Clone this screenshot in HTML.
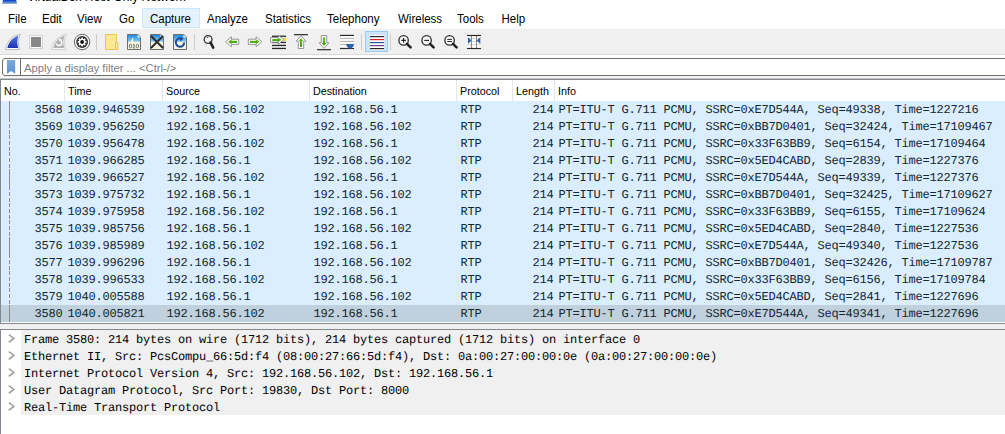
<!DOCTYPE html>
<html><head><meta charset="utf-8">
<style>
*{box-sizing:border-box;margin:0;padding:0}
html,body{width:1005px;height:434px;overflow:hidden;background:#fff;position:relative}
body{font-family:"Liberation Sans",sans-serif;color:#000}
.abs{position:absolute}
#title{position:absolute;left:27px;top:-9px;font-size:12px;line-height:12px;white-space:nowrap;color:#000}
#menu{position:absolute;left:0;top:8px;height:20px;width:1005px}
#menu span{position:absolute;top:0;height:20px;line-height:20px;font-size:11.5px;white-space:nowrap;transform:scaleY(1.12);transform-origin:50% 5.7px}
#menu .hot{background:#e5f3ff;border:1px solid #cce8ff}
#tb{position:absolute;left:0;top:28px;width:1005px;height:27px;background:#f0f0f0;border-top:1px solid #fafafa;border-bottom:1px solid #d8d8d8}
.sep{position:absolute;top:34px;width:1px;height:16px;background:#c8c8c8}
#filt{position:absolute;left:2px;top:58px;width:1010px;height:18px;border:1px solid #6e6e6e;border-radius:3px;background:#fff}
#plist{position:absolute;left:0;top:79px;width:1005px;height:245px;border:1px solid #828790;border-right:none;background:#fff;overflow:hidden}
.hdr{position:absolute;top:1px;height:21px;line-height:21px;font-size:10.75px;color:#000;white-space:nowrap}
.csep{position:absolute;top:0;width:1px;height:21px;background:#e5e5e5}
.row{position:absolute;left:0;width:1005px;height:17px;background:#daeeff;font-family:"Liberation Mono",monospace;font-size:12px;letter-spacing:-0.2px;line-height:18px;text-rendering:geometricPrecision;color:#12272e;white-space:nowrap}
.row.sel{background:#c0d0dc}
.tl{position:absolute;left:8px;width:1px;background:#8c8c8c}
.row span{position:absolute;top:0}
.no{left:0;width:61.5px;text-align:right}
.ln{left:511px;width:41.5px;text-align:right}
#dlist{position:absolute;left:0;top:329px;width:1005px;height:110px;border:1px solid #828790;border-right:none;background:#fff;overflow:hidden}
.drow{position:absolute;left:20px;width:990px;height:17px;background:#f0f0f0;font-family:"Liberation Mono",monospace;font-size:12px;letter-spacing:-0.2px;line-height:18px;text-rendering:geometricPrecision;color:#000;white-space:nowrap}
.drow span{position:absolute;left:3px;top:1px}
</style></head><body>
<svg width="20" height="5" style="position:absolute;left:0;top:0"><defs><linearGradient id="gti" x1="0" y1="0" x2="0" y2="1"><stop offset="0" stop-color="#0a3cc0"/><stop offset="0.55" stop-color="#3f78e0"/><stop offset="1" stop-color="#7f9fd8"/></linearGradient></defs><path d="M3,0 H16.2 L17,3.6 H2.2 Z" fill="url(#gti)"/><rect x="2.2" y="3.2" width="14.8" height="0.8" fill="#9aa4b4"/></svg>
<div id="title">VirtualBox Host-Only Network</div>
<div id="menu">
<span style="left:8px">File</span>
<span style="left:42px">Edit</span>
<span style="left:77px">View</span>
<span style="left:119px">Go</span>
<div class="hot" style="position:absolute;left:142px;top:0;width:58px;height:20px"></div><span style="left:150px">Capture</span>
<span style="left:207px">Analyze</span>
<span style="left:265px">Statistics</span>
<span style="left:327px">Telephony</span>
<span style="left:398px">Wireless</span>
<span style="left:457px">Tools</span>
<span style="left:501.5px">Help</span>
</div>
<svg id="tbsvg" width="1005" height="27" viewBox="0 28 1005 27" style="position:absolute;left:0;top:28px">
<defs>
<linearGradient id="gfin" x1="0" y1="0" x2="0" y2="1"><stop offset="0" stop-color="#5574dc"/><stop offset="1" stop-color="#1c32b4"/></linearGradient>
<linearGradient id="gsky" x1="0" y1="0" x2="0" y2="1"><stop offset="0" stop-color="#1b8de0"/><stop offset="1" stop-color="#8fcaf2"/></linearGradient>
<linearGradient id="ggrn" x1="0" y1="0" x2="0" y2="1"><stop offset="0" stop-color="#6cc420"/><stop offset="1" stop-color="#3a9a08"/></linearGradient>
</defs>
<rect x="0" y="28" width="1005" height="27" fill="#f0f0f0"/>
<rect x="0" y="28" width="1005" height="1" fill="#fbfbfb"/>
<rect x="0" y="54" width="1005" height="1" fill="#dadada"/>
<!-- separators -->
<rect x="96" y="34" width="1" height="16" fill="#cdcdcd"/>
<rect x="194" y="34" width="1" height="16" fill="#cdcdcd"/>
<rect x="361" y="34" width="1" height="16" fill="#cdcdcd"/>
<rect x="390" y="34" width="1" height="16" fill="#cdcdcd"/>
<!-- 1 shark fin -->
<path d="M5.6,49.6 C6.4,42.5 11.5,35.6 20.6,34.4 L19.4,36 C18.2,40.5 18.2,45 19.6,49.6 Z" fill="#fff" stroke="#bcbcbc" stroke-width="1"/>
<path d="M7.4,48 C8.4,42.6 12.2,37.6 18.4,35.8 C17,40.2 17,44.2 18.2,48 Z" fill="url(#gfin)"/>
<!-- 2 stop -->
<rect x="29.5" y="35.5" width="13" height="13" fill="#fff" stroke="#d2d2d2"/>
<rect x="31" y="37" width="10" height="10" fill="#888"/>
<!-- 3 restart fin (disabled) -->
<path d="M51.6,49.6 C52.4,42.5 57.5,35.6 66.6,34.4 L65.4,36 C64.2,40.5 64.2,45 65.6,49.6 Z" fill="#f8f8f8" stroke="#cfcfcf" stroke-width="1"/>
<path d="M53.4,48 C54.4,42.6 58.2,37.6 64.4,35.8 C63,40.2 63,44.2 64.2,48 Z" fill="#b2b2b2"/>
<path d="M60.6,40.2 A2.9,2.9 0 1 1 56.2,43.4" fill="none" stroke="#fff" stroke-width="1.5"/><path d="M58.8,38.6 L61.8,39.6 L59.8,42 Z" fill="#fff"/>
<!-- 4 gear -->
<circle cx="82.1" cy="42" r="7.7" fill="#fff" stroke="#555" stroke-width="0.9"/>
<circle cx="82.1" cy="42" r="5.9" fill="#303030"/>
<g fill="#fff" transform="translate(82.1,42)">
<circle r="3.3"/>
<rect x="-0.85" y="-4.4" width="1.7" height="8.8"/>
<rect x="-4.4" y="-0.85" width="8.8" height="1.7"/>
<rect x="-0.85" y="-4.4" width="1.7" height="8.8" transform="rotate(45)"/>
<rect x="-0.85" y="-4.4" width="1.7" height="8.8" transform="rotate(-45)"/>
</g>
<circle cx="82.1" cy="42" r="1.9" fill="#111"/>
<!-- 5 open folder/doc -->
<rect x="105.5" y="34.5" width="11" height="15" fill="#fde89a" stroke="#e9c45a"/>
<rect x="115.5" y="42.5" width="2.4" height="7" fill="#fde89a" stroke="#e9c45a"/>
<!-- 6 file 010 -->
<path d="M127.5,34.5 H137.8 L140.5,37.2 V49.5 H127.5 Z" fill="#f7f5df" stroke="#6e6e6e"/>
<path d="M128,35 H137.5 L140,37.5 V41.8 H128 Z" fill="url(#gsky)"/>
<path d="M137.5,35 L140,37.5 H137.5 Z" fill="#fff"/>
<path d="M130.8,41.8 C131.5,39.5 132.5,38 133.4,37.6 C133,39.5 133,40.5 133.6,41.8 Z" fill="#fff"/>
<g fill="none" stroke="#666" stroke-width="0.9"><ellipse cx="130.6" cy="46.1" rx="1.25" ry="1.85"/><path d="M133.2,44.6 L134.1,44.1 V48 M133.1,48 H135"/><ellipse cx="137.4" cy="46.1" rx="1.25" ry="1.85"/></g>
<!-- 7 close file -->
<path d="M150.5,34.5 H160.8 L163.5,37.2 V49.5 H150.5 Z" fill="#f7f5df" stroke="#6e6e6e"/>
<path d="M151,35 H160.5 L163,37.5 V41.8 H151 Z" fill="url(#gsky)"/>
<path d="M160.5,35 L163,37.5 H160.5 Z" fill="#fff"/>
<path d="M151.5,36.5 L162.5,47.5 M162.5,36.5 L151.5,47.5" stroke="#2e2e2e" stroke-width="2.1" stroke-linecap="round"/>
<!-- 8 reload -->
<path d="M173.5,34.5 H183.8 L186.5,37.2 V49.5 H173.5 Z" fill="#f7f5df" stroke="#6e6e6e"/>
<path d="M174,35 H183.5 L186,37.5 V41.8 H174 Z" fill="url(#gsky)"/>
<path d="M183.5,35 L186,37.5 H183.5 Z" fill="#fff"/>
<path d="M184.2,42.5 A4.2,4.2 0 1 1 181.5,38.6" fill="none" stroke="#1a4aa0" stroke-width="2"/>
<path d="M179.8,36.4 L183.6,38.6 L180.2,41.4 Z" fill="#1a4aa0"/>
<!-- 9 find -->
<circle cx="208.1" cy="39.5" r="3.9" fill="#f3f3f3" stroke="#333" stroke-width="1.3"/>
<path d="M206.5,38.2 A2,2 0 0 1 208.4,37.2" fill="none" stroke="#444" stroke-width="0.9"/>
<path d="M210.6,42.6 L213.2,47.6" stroke="#222" stroke-width="2.6" stroke-linecap="round"/>
<!-- 10 back -->
<path d="M225.6,41.8 L231.4,36.8 V39.2 H238.7 V44.4 H231.4 V46.8 Z" fill="#fff" stroke="#8a8a8a" stroke-width="0.9" stroke-linejoin="round"/>
<path d="M228,41.8 L231.6,39.3 V40.8 H237 V42.9 H231.6 V44.3 Z" fill="url(#ggrn)"/>
<!-- 11 forward -->
<path d="M261.9,41.8 L256.1,36.8 V39.2 H248.3 V44.4 H256.1 V46.8 Z" fill="#fff" stroke="#8a8a8a" stroke-width="0.9" stroke-linejoin="round"/>
<path d="M259.5,41.8 L255.9,39.3 V40.8 H250 V42.9 H255.9 V44.3 Z" fill="url(#ggrn)"/>
<!-- 12 goto packet -->
<rect x="272" y="35.6" width="14" height="1.3" fill="#2a2a2a"/>
<rect x="272" y="41.8" width="14" height="1.3" fill="#2a2a2a"/>
<rect x="272" y="44.8" width="14" height="1.3" fill="#2a2a2a"/>
<rect x="272" y="47.8" width="14" height="1.3" fill="#2a2a2a"/>
<rect x="283" y="37.8" width="3" height="3" fill="#f6d83a"/>
<path d="M283.6,39.7 L278.4,35.2 V37.5 H270.6 V42.2 H278.4 V44.4 Z" fill="#fff" stroke="#8a8a8a" stroke-width="0.9" stroke-linejoin="round"/>
<path d="M281.4,39.8 L277.8,37.6 V38.9 H272.2 V40.9 H277.8 V42.2 Z" fill="url(#ggrn)"/>
<!-- 13 first packet -->
<rect x="294" y="34" width="14" height="1.3" fill="#3a3a3a"/>
<path d="M301,35.6 L305.9,41.2 H303.7 V48.5 H298.3 V41.2 H296.1 Z" fill="#fff" stroke="#8a8a8a" stroke-width="0.9" stroke-linejoin="round"/>
<path d="M301,38 L303.4,41 H302.1 V46.8 H299.9 V41 H298.6 Z" fill="url(#ggrn)"/>
<!-- 14 last packet -->
<rect x="317" y="49" width="14" height="1.3" fill="#3a3a3a"/>
<path d="M324,48.4 L328.9,42.8 H326.7 V35.5 H321.3 V42.8 H319.1 Z" fill="#fff" stroke="#8a8a8a" stroke-width="0.9" stroke-linejoin="round"/>
<path d="M324,46 L326.4,43 H325.1 V37.2 H322.9 V43 H321.6 Z" fill="url(#ggrn)"/>
<!-- 15 auto scroll -->
<rect x="340" y="34.5" width="14" height="15" fill="#fff" opacity="0.6"/>
<rect x="340" y="34.8" width="14" height="1.2" fill="#2a2a2a"/>
<rect x="340" y="37.9" width="14" height="1.1" fill="#b9bcb2"/>
<rect x="340" y="40.9" width="14" height="1.1" fill="#b9bcb2"/>
<rect x="340" y="43.9" width="14" height="1.1" fill="#b9bcb2"/>
<rect x="340" y="47.9" width="14" height="1.2" fill="#2a2a2a"/>
<path d="M346.2,44 H354 C354,46.5 351.5,48.5 350.1,48.8 C348.7,48.5 346.2,46.5 346.2,44 Z" fill="#2d60aa"/>
<!-- 16 colorize (pressed) -->
<rect x="365.5" y="31.5" width="22" height="20" fill="#cce4f7" stroke="#99ccf5"/>
<rect x="370" y="35" width="14" height="15" fill="#fff"/>
<rect x="370" y="36" width="14" height="1.2" fill="#2a2a2a"/>
<rect x="370" y="39" width="14" height="1.2" fill="#e02222"/>
<rect x="370" y="42" width="14" height="1.2" fill="#2454a4"/>
<rect x="370" y="45" width="14" height="1.2" fill="#6a4486"/>
<rect x="370" y="48" width="14" height="1.2" fill="#2a2a2a"/>
<!-- 17 zoom in -->
<circle cx="403.6" cy="40.4" r="4.7" fill="#f6f6f6" stroke="#2e2e2e" stroke-width="1.3"/>
<path d="M401.3,40.4 H405.9 M403.6,38.1 V42.7" stroke="#222" stroke-width="1.1"/>
<path d="M407,43.8 L410.6,47.4" stroke="#222" stroke-width="2.6" stroke-linecap="round"/>
<!-- 18 zoom out -->
<circle cx="426.6" cy="40.4" r="4.7" fill="#f6f6f6" stroke="#2e2e2e" stroke-width="1.3"/>
<path d="M424.2,40.4 H429" stroke="#222" stroke-width="1.1"/>
<path d="M430,43.8 L433.6,47.4" stroke="#222" stroke-width="2.6" stroke-linecap="round"/>
<!-- 19 zoom normal -->
<circle cx="449.6" cy="40.4" r="4.7" fill="#f6f6f6" stroke="#2e2e2e" stroke-width="1.3"/>
<path d="M447.3,39.4 H451.9 M447.3,41.5 H451.9" stroke="#222" stroke-width="1"/>
<path d="M453,43.8 L456.6,47.4" stroke="#222" stroke-width="2.6" stroke-linecap="round"/>
<!-- 20 resize columns -->
<rect x="467" y="35" width="14" height="14" fill="#fff"/>
<rect x="467" y="38.3" width="14" height="0.8" fill="#c4c8bc"/>
<rect x="467" y="41.3" width="14" height="0.8" fill="#c4c8bc"/>
<rect x="467" y="44.3" width="14" height="0.8" fill="#c4c8bc"/>
<rect x="471" y="35" width="1" height="14" fill="#8a8a8a"/>
<rect x="476" y="35" width="1" height="14" fill="#8a8a8a"/>
<rect x="467" y="34.9" width="14" height="1.2" fill="#2a2a2a"/>
<rect x="467" y="47.9" width="14" height="1.2" fill="#2a2a2a"/>
<path d="M468,37.2 L471.4,40.6 L468,44 Z" fill="#2e62b0"/>
<path d="M480.3,37.2 L476.7,40.6 L480.3,44 Z" fill="#2e62b0"/>
</svg>

<div id="filt"><svg width="20" height="17" style="position:absolute;left:0;top:0"><defs><linearGradient id="gbm" x1="0" y1="0" x2="0" y2="1"><stop offset="0" stop-color="#7eaadc"/><stop offset="1" stop-color="#5b90d2"/></linearGradient></defs><path d="M4,1.1 H12.2 V14.7 L8.1,12 L4,14.7 Z" fill="url(#gbm)"/><rect x="17" y="0" width="1" height="17" fill="#6e6e6e"/></svg><span style="position:absolute;left:21px;top:1px;font-size:11.2px;line-height:16px;color:#808080">Apply a display filter ... &lt;Ctrl-/&gt;</span></div>
<div id="plist">
<div class="row" style="top:21px"><i class="tl" style="top:0;height:17px"></i><span class="no">3568</span><span style="left:66.6px">1039.946539</span><span style="left:165.5px">192.168.56.102</span><span style="left:312.5px">192.168.56.1</span><span style="left:459.6px">RTP</span><span class="ln">214</span><span style="left:557.4px">PT=ITU-T G.711 PCMU, SSRC=0xE7D544A, Seq=49338, Time=1227216</span></div>
<div class="row" style="top:38px"><i class="tl" style="top:0;height:4px"></i><i class="tl" style="top:6px;height:4px"></i><i class="tl" style="top:12px;height:4px"></i><span class="no">3569</span><span style="left:66.6px">1039.956250</span><span style="left:165.5px">192.168.56.1</span><span style="left:312.5px">192.168.56.102</span><span style="left:459.6px">RTP</span><span class="ln">214</span><span style="left:557.4px">PT=ITU-T G.711 PCMU, SSRC=0xBB7D0401, Seq=32424, Time=17109467</span></div>
<div class="row" style="top:55px"><i class="tl" style="top:0;height:4px"></i><i class="tl" style="top:6px;height:4px"></i><i class="tl" style="top:12px;height:4px"></i><span class="no">3570</span><span style="left:66.6px">1039.956478</span><span style="left:165.5px">192.168.56.102</span><span style="left:312.5px">192.168.56.1</span><span style="left:459.6px">RTP</span><span class="ln">214</span><span style="left:557.4px">PT=ITU-T G.711 PCMU, SSRC=0x33F63BB9, Seq=6154, Time=17109464</span></div>
<div class="row" style="top:72px"><i class="tl" style="top:0;height:4px"></i><i class="tl" style="top:6px;height:4px"></i><i class="tl" style="top:12px;height:4px"></i><span class="no">3571</span><span style="left:66.6px">1039.966285</span><span style="left:165.5px">192.168.56.1</span><span style="left:312.5px">192.168.56.102</span><span style="left:459.6px">RTP</span><span class="ln">214</span><span style="left:557.4px">PT=ITU-T G.711 PCMU, SSRC=0x5ED4CABD, Seq=2839, Time=1227376</span></div>
<div class="row" style="top:89px"><i class="tl" style="top:0;height:17px"></i><span class="no">3572</span><span style="left:66.6px">1039.966527</span><span style="left:165.5px">192.168.56.102</span><span style="left:312.5px">192.168.56.1</span><span style="left:459.6px">RTP</span><span class="ln">214</span><span style="left:557.4px">PT=ITU-T G.711 PCMU, SSRC=0xE7D544A, Seq=49339, Time=1227376</span></div>
<div class="row" style="top:106px"><i class="tl" style="top:0;height:4px"></i><i class="tl" style="top:6px;height:4px"></i><i class="tl" style="top:12px;height:4px"></i><span class="no">3573</span><span style="left:66.6px">1039.975732</span><span style="left:165.5px">192.168.56.1</span><span style="left:312.5px">192.168.56.102</span><span style="left:459.6px">RTP</span><span class="ln">214</span><span style="left:557.4px">PT=ITU-T G.711 PCMU, SSRC=0xBB7D0401, Seq=32425, Time=17109627</span></div>
<div class="row" style="top:123px"><i class="tl" style="top:0;height:4px"></i><i class="tl" style="top:6px;height:4px"></i><i class="tl" style="top:12px;height:4px"></i><span class="no">3574</span><span style="left:66.6px">1039.975958</span><span style="left:165.5px">192.168.56.102</span><span style="left:312.5px">192.168.56.1</span><span style="left:459.6px">RTP</span><span class="ln">214</span><span style="left:557.4px">PT=ITU-T G.711 PCMU, SSRC=0x33F63BB9, Seq=6155, Time=17109624</span></div>
<div class="row" style="top:140px"><i class="tl" style="top:0;height:4px"></i><i class="tl" style="top:6px;height:4px"></i><i class="tl" style="top:12px;height:4px"></i><span class="no">3575</span><span style="left:66.6px">1039.985756</span><span style="left:165.5px">192.168.56.1</span><span style="left:312.5px">192.168.56.102</span><span style="left:459.6px">RTP</span><span class="ln">214</span><span style="left:557.4px">PT=ITU-T G.711 PCMU, SSRC=0x5ED4CABD, Seq=2840, Time=1227536</span></div>
<div class="row" style="top:157px"><i class="tl" style="top:0;height:17px"></i><span class="no">3576</span><span style="left:66.6px">1039.985989</span><span style="left:165.5px">192.168.56.102</span><span style="left:312.5px">192.168.56.1</span><span style="left:459.6px">RTP</span><span class="ln">214</span><span style="left:557.4px">PT=ITU-T G.711 PCMU, SSRC=0xE7D544A, Seq=49340, Time=1227536</span></div>
<div class="row" style="top:174px"><i class="tl" style="top:0;height:4px"></i><i class="tl" style="top:6px;height:4px"></i><i class="tl" style="top:12px;height:4px"></i><span class="no">3577</span><span style="left:66.6px">1039.996296</span><span style="left:165.5px">192.168.56.1</span><span style="left:312.5px">192.168.56.102</span><span style="left:459.6px">RTP</span><span class="ln">214</span><span style="left:557.4px">PT=ITU-T G.711 PCMU, SSRC=0xBB7D0401, Seq=32426, Time=17109787</span></div>
<div class="row" style="top:191px"><i class="tl" style="top:0;height:4px"></i><i class="tl" style="top:6px;height:4px"></i><i class="tl" style="top:12px;height:4px"></i><span class="no">3578</span><span style="left:66.6px">1039.996533</span><span style="left:165.5px">192.168.56.102</span><span style="left:312.5px">192.168.56.1</span><span style="left:459.6px">RTP</span><span class="ln">214</span><span style="left:557.4px">PT=ITU-T G.711 PCMU, SSRC=0x33F63BB9, Seq=6156, Time=17109784</span></div>
<div class="row" style="top:208px"><i class="tl" style="top:0;height:4px"></i><i class="tl" style="top:6px;height:4px"></i><i class="tl" style="top:12px;height:4px"></i><span class="no">3579</span><span style="left:66.6px">1040.005588</span><span style="left:165.5px">192.168.56.1</span><span style="left:312.5px">192.168.56.102</span><span style="left:459.6px">RTP</span><span class="ln">214</span><span style="left:557.4px">PT=ITU-T G.711 PCMU, SSRC=0x5ED4CABD, Seq=2841, Time=1227696</span></div>
<div class="row sel" style="top:225px"><i class="tl" style="top:0;height:17px"></i><span class="no">3580</span><span style="left:66.6px">1040.005821</span><span style="left:165.5px">192.168.56.102</span><span style="left:312.5px">192.168.56.1</span><span style="left:459.6px">RTP</span><span class="ln">214</span><span style="left:557.4px">PT=ITU-T G.711 PCMU, SSRC=0xE7D544A, Seq=49341, Time=1227696</span></div>
<div class="hdr" style="left:3px">No.</div>
<div class="csep" style="left:63px"></div>
<div class="hdr" style="left:67px">Time</div>
<div class="csep" style="left:161px"></div>
<div class="hdr" style="left:165px">Source</div>
<div class="csep" style="left:308px"></div>
<div class="hdr" style="left:312px">Destination</div>
<div class="csep" style="left:455px"></div>
<div class="hdr" style="left:459px">Protocol</div>
<div class="csep" style="left:511px"></div>
<div class="hdr" style="left:515px">Length</div>
<div class="csep" style="left:553px"></div>
<div class="hdr" style="left:557px">Info</div>
</div>
<div style="position:absolute;left:0;top:324px;width:1005px;height:5px;background:#f0f0f0"></div>
<div style="position:absolute;left:0;top:76px;width:1005px;height:3px;background:#f3f3f3"></div>
<div style="position:absolute;left:0;top:78px;width:1005px;height:1px;background:#c4c4c4"></div>
<div id="dlist"><svg class="chev" width="20" height="17" style="position:absolute;left:0;top:1px"><path d="M7.8,3.6 L12.8,7.4 L7.8,11.2" fill="none" stroke="#a4a4a4" stroke-width="1.7"/></svg><div class="drow" style="top:0px"><span>Frame 3580: 214 bytes on wire (1712 bits), 214 bytes captured (1712 bits) on interface 0</span></div>
<svg class="chev" width="20" height="17" style="position:absolute;left:0;top:18px"><path d="M7.8,3.6 L12.8,7.4 L7.8,11.2" fill="none" stroke="#a4a4a4" stroke-width="1.7"/></svg><div class="drow" style="top:17px"><span>Ethernet II, Src: PcsCompu_66:5d:f4 (08:00:27:66:5d:f4), Dst: 0a:00:27:00:00:0e (0a:00:27:00:00:0e)</span></div>
<svg class="chev" width="20" height="17" style="position:absolute;left:0;top:35px"><path d="M7.8,3.6 L12.8,7.4 L7.8,11.2" fill="none" stroke="#a4a4a4" stroke-width="1.7"/></svg><div class="drow" style="top:34px"><span>Internet Protocol Version 4, Src: 192.168.56.102, Dst: 192.168.56.1</span></div>
<svg class="chev" width="20" height="17" style="position:absolute;left:0;top:52px"><path d="M7.8,3.6 L12.8,7.4 L7.8,11.2" fill="none" stroke="#a4a4a4" stroke-width="1.7"/></svg><div class="drow" style="top:51px"><span>User Datagram Protocol, Src Port: 19830, Dst Port: 8000</span></div>
<svg class="chev" width="20" height="17" style="position:absolute;left:0;top:69px"><path d="M7.8,3.6 L12.8,7.4 L7.8,11.2" fill="none" stroke="#a4a4a4" stroke-width="1.7"/></svg><div class="drow" style="top:68px"><span>Real-Time Transport Protocol</span></div></div>
</body></html>
